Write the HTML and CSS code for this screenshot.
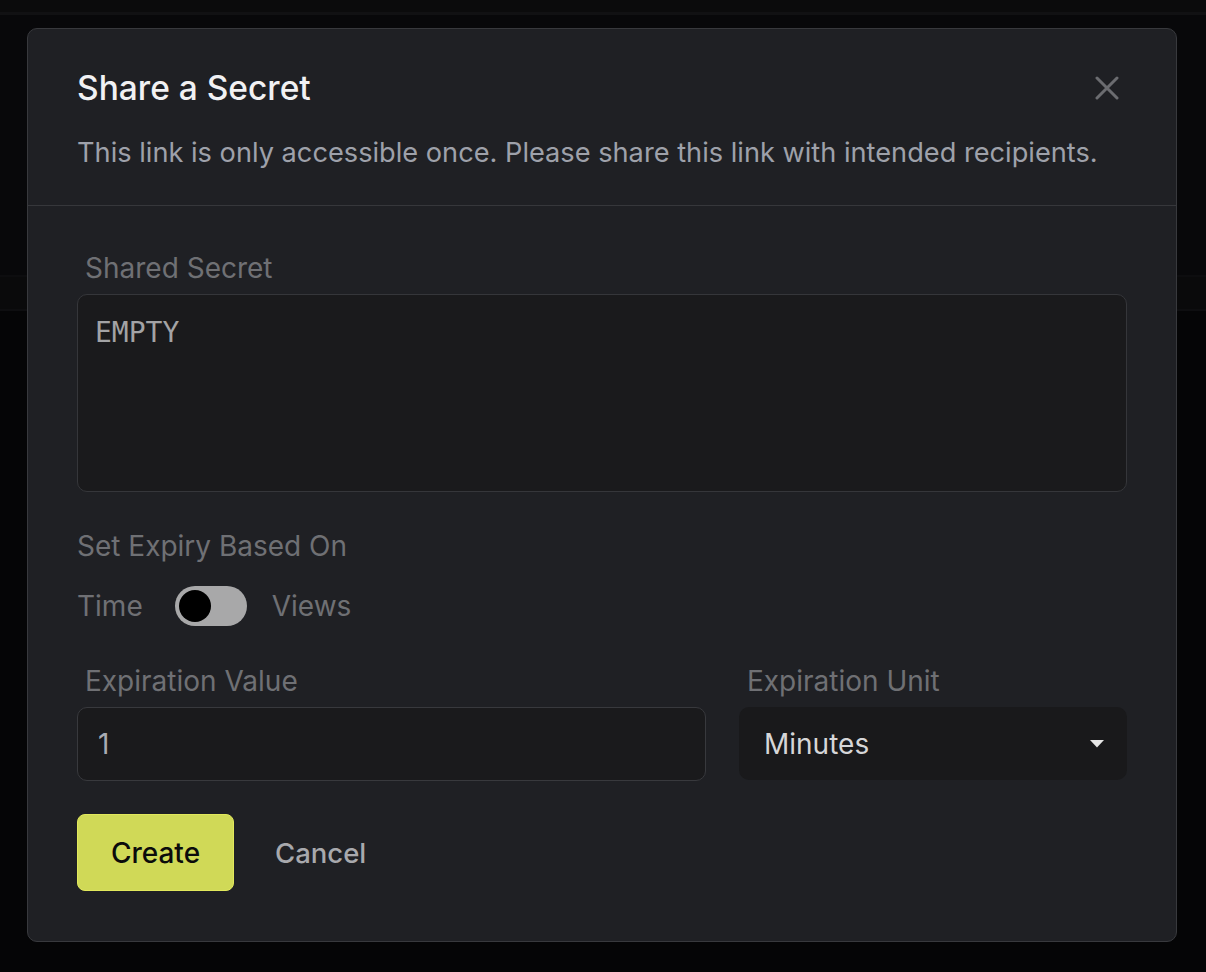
FILE: index.html
```html
<!DOCTYPE html>
<html>
<head>
<meta charset="utf-8">
<link rel="stylesheet" href="styles.css">
</head>
<body>
<div class="modal">
  <div class="modal-head">
    <div class="title-row">
      <h2 class="title">Share a Secret</h2>
      <button class="close" aria-label="Close">
        <svg width="24" height="24" viewBox="0 0 24 24"><path d="M2 2 L22 22 M22 2 L2 22" stroke="#6b6c70" stroke-width="3" stroke-linecap="round"/></svg>
      </button>
    </div>
    <p class="subtitle">This link is only accessible once. Please share this link with intended recipients.</p>
  </div>
  <div class="modal-body">
    <label class="field-label indent">Shared Secret</label>
    <div class="textarea">EMPTY</div>

    <div class="field-label expiry-label">Set Expiry Based On</div>
    <div class="toggle-row">
      <span class="toggle-text">Time</span>
      <span class="switch"><span class="thumb"></span></span>
      <span class="toggle-text">Views</span>
    </div>

    <div class="exp-grid">
      <div class="exp-col">
        <label class="field-label indent">Expiration Value</label>
        <div class="input">1</div>
      </div>
      <div class="exp-col">
        <label class="field-label indent">Expiration Unit</label>
        <div class="select">
          <span>Minutes</span>
          <svg width="14" height="8" viewBox="0 0 14 8"><path d="M0 0 H14 L7 7.5 Z" fill="#e6e6e6"/></svg>
        </div>
      </div>
    </div>

    <div class="actions">
      <button class="btn-create">Create</button>
      <button class="btn-cancel">Cancel</button>
    </div>
  </div>
</div>
</body>
</html>
```

FILE: styles.css
```css
* { box-sizing: border-box; }
html, body { margin: 0; padding: 0; }
body {
  width: 1206px;
  height: 972px;
  overflow: hidden;
  font-family: Inter, "Noto Sans", sans-serif;
  background:
    linear-gradient(to bottom,
      #0b0b0c 0px, #0b0b0c 12px,
      #111113 12px, #111113 15px,
      #08080a 15px, #08080a 275px,
      #0d0d0f 275px, #0d0d0f 277px,
      #0a0a0b 277px, #0a0a0b 309px,
      #0e0e10 309px, #0e0e10 311px,
      #050506 311px, #050506 100%);
  padding: 28px 0 0 27px;
}
.modal {
  width: 1150px;
  height: 914px;
  background: #1f2024;
  border: 1px solid #38393d;
  border-radius: 10px;
  display: flex;
  flex-direction: column;
}
.modal-head {
  padding: 41px 49px 36px 49px;
  border-bottom: 1px solid #36373b;
}
.title-row {
  display: flex;
  align-items: center;
  justify-content: space-between;
}
.title {
  margin: 0;
  font-size: 33.5px;
  line-height: 36px;
  font-weight: 500;
  color: #f1f1f3;
}
.close {
  background: none;
  border: none;
  padding: 0;
  margin-right: 8px;
  width: 24px;
  height: 24px;
  display: flex;
}
.subtitle {
  margin: 31px 0 0 0;
  font-size: 27.2px;
  line-height: 32px;
  color: #9ea1aa;
}
.modal-body {
  padding: 47px 49px 0 49px;
  display: flex;
  flex-direction: column;
}
.field-label {
  display: block;
  font-size: 28px;
  line-height: 30px;
  color: #6f7074;
}
.indent { padding-left: 8px; }
.textarea {
  margin-top: 11px;
  height: 198px;
  background: #1a1a1c;
  border: 1px solid #35363a;
  border-radius: 10px;
  padding: 23px 17px;
  font-family: "DejaVu Sans Mono", monospace;
  font-size: 28px;
  line-height: 30px;
  color: #a3a3a5;
}
.expiry-label { margin-top: 39px; }
.toggle-row {
  margin-top: 25px;
  display: flex;
  align-items: center;
}
.toggle-text {
  font-size: 28px;
  line-height: 30px;
  color: #6f7074;
}
.switch {
  width: 72px;
  height: 40px;
  border-radius: 20px;
  background: #a8a8a9;
  margin: 0 25px 0 32px;
  display: flex;
  align-items: center;
  padding-left: 4px;
}
.thumb {
  width: 32px;
  height: 32px;
  border-radius: 50%;
  background: #000;
}
.exp-grid {
  margin-top: 40px;
  display: grid;
  grid-template-columns: 629px 388px;
  column-gap: 33px;
}
.exp-col { display: flex; flex-direction: column; }
.input {
  margin-top: 11px;
  height: 74px;
  background: #1a1a1c;
  border: 1px solid #38393d;
  border-radius: 10px;
  padding: 0 20px;
  display: flex;
  align-items: center;
  font-size: 28px;
  color: #a9abb3;
}
.select {
  margin-top: 11px;
  height: 73px;
  background: #19191b;
  border-radius: 10px;
  padding: 0 23px 0 25px;
  display: flex;
  align-items: center;
  justify-content: space-between;
  font-size: 28px;
  color: #d6d6d8;
}
.actions {
  margin-top: 33px;
  display: flex;
  align-items: center;
}
.btn-create {
  width: 157px;
  height: 77px;
  background: #d0d957;
  border: 1px solid #e1e85c;
  border-radius: 8px;
  font-family: Inter, sans-serif;
  font-size: 28px;
  font-weight: 500;
  color: #0b0b0b;
}
.btn-cancel {
  margin-left: 41px;
  background: none;
  border: none;
  padding: 0;
  font-family: Inter, sans-serif;
  font-size: 27.5px;
  font-weight: 500;
  color: #a8a9ad;
}
```
